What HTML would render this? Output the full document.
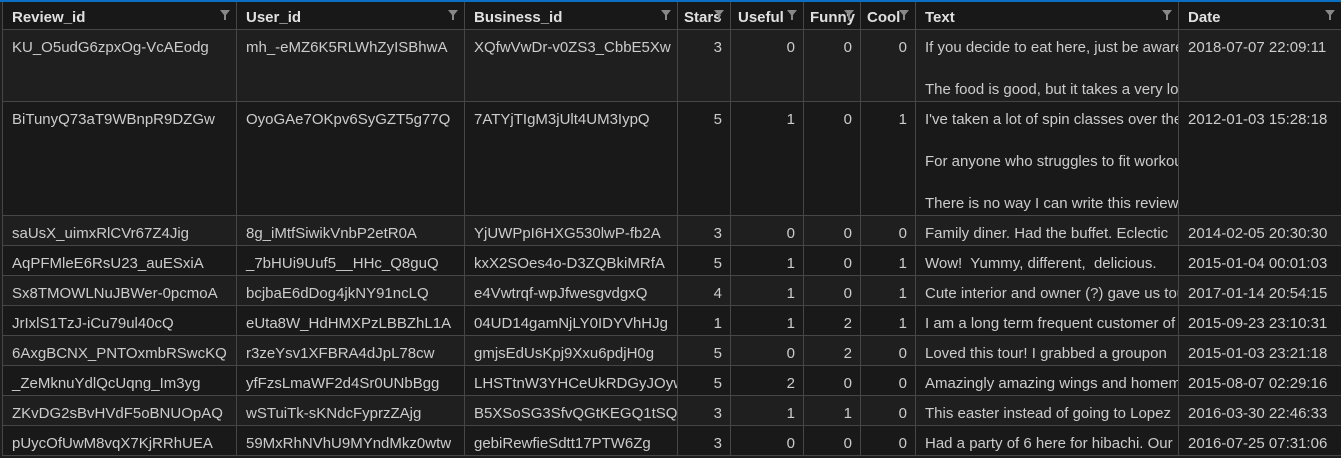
<!DOCTYPE html><html><head><style>
body{margin:0;background:#1e1e1e;width:1341px;height:458px;overflow:hidden;font-family:"Liberation Sans",sans-serif;font-size:15px;color:#cccccc;border-top:2px solid #0a6fc2;box-sizing:border-box}
.r{position:absolute;left:2px;width:1339px;display:flex;border-bottom:1px solid #464646;box-sizing:border-box}
.r>div{box-sizing:border-box;border-left:1px solid #464646;padding:0 9px;white-space:nowrap;overflow:hidden;line-height:21px;padding-top:7px;flex:none;position:relative}
.h>div{background:#181818;font-weight:bold;color:#e0e0e0;line-height:27px;padding-top:2px;padding-right:2px}
.h svg{position:absolute;right:6px;top:8px}
.a>div{background:#1f1f1f}.b>div{background:#191919}
.c1{width:234px}.c2{width:228px}.c3{width:213px}.c4{width:53px}.c5{width:73px}.c6{width:57px}.c7{width:55px}.c8{width:263px}.c9{width:163px}
.n{text-align:right;padding-right:8px!important}
</style></head><body>
<div class="r h" style="top:2px;height:28px"><div class="c1">Review_id<svg width="10" height="10"><path d="M0 0H10L6 5V10H4V5Z" fill="#888"/></svg></div><div class="c2">User_id<svg width="10" height="10"><path d="M0 0H10L6 5V10H4V5Z" fill="#888"/></svg></div><div class="c3">Business_id<svg width="10" height="10"><path d="M0 0H10L6 5V10H4V5Z" fill="#888"/></svg></div><div class="c4" style="padding-left:6px">Stars<svg width="10" height="10"><path d="M0 0H10L6 5V10H4V5Z" fill="#888"/></svg></div><div class="c5" style="padding-left:7px">Useful<svg width="10" height="10"><path d="M0 0H10L6 5V10H4V5Z" fill="#888"/></svg></div><div class="c6" style="padding-left:6px">Funny<svg width="10" height="10"><path d="M0 0H10L6 5V10H4V5Z" fill="#888"/></svg></div><div class="c7" style="padding-left:6px">Cool<svg width="10" height="10"><path d="M0 0H10L6 5V10H4V5Z" fill="#888"/></svg></div><div class="c8">Text<svg width="10" height="10"><path d="M0 0H10L6 5V10H4V5Z" fill="#888"/></svg></div><div class="c9">Date<svg width="10" height="10"><path d="M0 0H10L6 5V10H4V5Z" fill="#888"/></svg></div></div>
<div class="r a" style="top:30px;height:72px"><div class="c1">KU_O5udG6zpxOg-VcAEodg</div><div class="c2">mh_-eMZ6K5RLWhZyISBhwA</div><div class="c3">XQfwVwDr-v0ZS3_CbbE5Xw</div><div class="c4 n">3</div><div class="c5 n">0</div><div class="c6 n">0</div><div class="c7 n">0</div><div class="c8">If you decide to eat here, just be aware<br><br>The food is good, but it takes a very long</div><div class="c9">2018-07-07 22:09:11</div></div>
<div class="r b" style="top:102px;height:114px"><div class="c1">BiTunyQ73aT9WBnpR9DZGw</div><div class="c2">OyoGAe7OKpv6SyGZT5g77Q</div><div class="c3">7ATYjTIgM3jUlt4UM3IypQ</div><div class="c4 n">5</div><div class="c5 n">1</div><div class="c6 n">0</div><div class="c7 n">1</div><div class="c8">I've taken a lot of spin classes over the<br><br>For anyone who struggles to fit workouts<br><br>There is no way I can write this review</div><div class="c9">2012-01-03 15:28:18</div></div>
<div class="r a" style="top:216px;height:30px"><div class="c1">saUsX_uimxRlCVr67Z4Jig</div><div class="c2">8g_iMtfSiwikVnbP2etR0A</div><div class="c3">YjUWPpI6HXG530lwP-fb2A</div><div class="c4 n">3</div><div class="c5 n">0</div><div class="c6 n">0</div><div class="c7 n">0</div><div class="c8">Family diner. Had the buffet. Eclectic</div><div class="c9">2014-02-05 20:30:30</div></div>
<div class="r b" style="top:246px;height:30px"><div class="c1">AqPFMleE6RsU23_auESxiA</div><div class="c2">_7bHUi9Uuf5__HHc_Q8guQ</div><div class="c3">kxX2SOes4o-D3ZQBkiMRfA</div><div class="c4 n">5</div><div class="c5 n">1</div><div class="c6 n">0</div><div class="c7 n">1</div><div class="c8">Wow!&nbsp; Yummy, different,&nbsp; delicious.</div><div class="c9">2015-01-04 00:01:03</div></div>
<div class="r a" style="top:276px;height:30px"><div class="c1">Sx8TMOWLNuJBWer-0pcmoA</div><div class="c2">bcjbaE6dDog4jkNY91ncLQ</div><div class="c3">e4Vwtrqf-wpJfwesgvdgxQ</div><div class="c4 n">4</div><div class="c5 n">1</div><div class="c6 n">0</div><div class="c7 n">1</div><div class="c8">Cute interior and owner (?) gave us tour</div><div class="c9">2017-01-14 20:54:15</div></div>
<div class="r b" style="top:306px;height:30px"><div class="c1">JrIxlS1TzJ-iCu79ul40cQ</div><div class="c2">eUta8W_HdHMXPzLBBZhL1A</div><div class="c3">04UD14gamNjLY0IDYVhHJg</div><div class="c4 n">1</div><div class="c5 n">1</div><div class="c6 n">2</div><div class="c7 n">1</div><div class="c8">I am a long term frequent customer of</div><div class="c9">2015-09-23 23:10:31</div></div>
<div class="r a" style="top:336px;height:30px"><div class="c1">6AxgBCNX_PNTOxmbRSwcKQ</div><div class="c2">r3zeYsv1XFBRA4dJpL78cw</div><div class="c3">gmjsEdUsKpj9Xxu6pdjH0g</div><div class="c4 n">5</div><div class="c5 n">0</div><div class="c6 n">2</div><div class="c7 n">0</div><div class="c8">Loved this tour! I grabbed a groupon</div><div class="c9">2015-01-03 23:21:18</div></div>
<div class="r b" style="top:366px;height:30px"><div class="c1">_ZeMknuYdlQcUqng_Im3yg</div><div class="c2">yfFzsLmaWF2d4Sr0UNbBgg</div><div class="c3">LHSTtnW3YHCeUkRDGyJOyw</div><div class="c4 n">5</div><div class="c5 n">2</div><div class="c6 n">0</div><div class="c7 n">0</div><div class="c8">Amazingly amazing wings and homemade</div><div class="c9">2015-08-07 02:29:16</div></div>
<div class="r a" style="top:396px;height:30px"><div class="c1">ZKvDG2sBvHVdF5oBNUOpAQ</div><div class="c2">wSTuiTk-sKNdcFyprzZAjg</div><div class="c3">B5XSoSG3SfvQGtKEGQ1tSQ</div><div class="c4 n">3</div><div class="c5 n">1</div><div class="c6 n">1</div><div class="c7 n">0</div><div class="c8">This easter instead of going to Lopez</div><div class="c9">2016-03-30 22:46:33</div></div>
<div class="r b" style="top:426px;height:30px"><div class="c1">pUycOfUwM8vqX7KjRRhUEA</div><div class="c2">59MxRhNVhU9MYndMkz0wtw</div><div class="c3">gebiRewfieSdtt17PTW6Zg</div><div class="c4 n">3</div><div class="c5 n">0</div><div class="c6 n">0</div><div class="c7 n">0</div><div class="c8">Had a party of 6 here for hibachi. Our</div><div class="c9">2016-07-25 07:31:06</div></div>
</body></html>
